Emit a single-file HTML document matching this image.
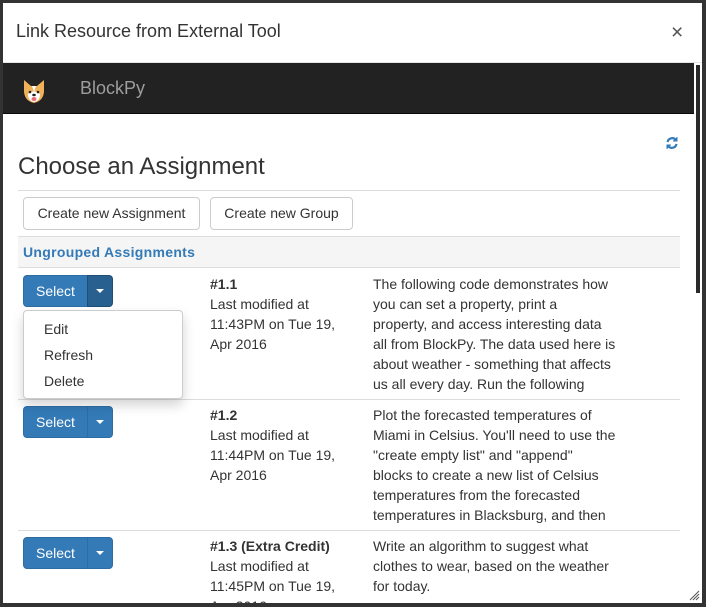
<!DOCTYPE html>
<html><head><meta charset="utf-8"><style>
*{box-sizing:border-box;margin:0;padding:0}
body{width:706px;height:607px;background:#333;font-family:"Liberation Sans",Arial,sans-serif;color:#333;font-size:14px;overflow:hidden;position:relative}
.modal{position:absolute;left:3px;top:3px;width:699px;height:600px;background:#fff;overflow:hidden}
.hdr{position:absolute;left:0;top:0;width:699px;height:60px;border-bottom:1px solid #e5e5e5}
.hdr .t{position:absolute;left:13px;top:18px;font-size:18px;color:#333}
.hdr .x{position:absolute;left:668px;top:18px;font-size:21px;color:#555}
.nav{position:absolute;left:0;top:60px;width:691px;height:51px;background:#222;border-bottom:1px solid #080808}
.nav .b{position:absolute;left:77px;top:15px;font-size:18px;color:#9d9d9d}
.sb{position:absolute;left:693px;top:62px;width:4px;height:228px;background:#2a2a2a}
.abs{position:absolute}
h2{position:absolute;left:15px;top:150px;font-size:24px;font-weight:normal;color:#333}
.line{position:absolute;left:15px;width:662px;height:1px;background:#ddd}
.btn{position:absolute;top:194px;height:33px;border:1px solid #ccc;border-radius:4px;background:#fff;font-size:14px;line-height:31px;text-align:center;color:#333}
.grp{position:absolute;left:15px;top:233px;width:662px;height:32px;background:#f5f5f5;border-top:1px solid #ddd;border-bottom:1px solid #ddd;color:#337ab7;font-weight:bold;padding:7px 5px;letter-spacing:0.3px}
.sel{position:absolute;left:20px;width:90px;height:32px}
.sel .a{position:absolute;left:0;top:0;width:65px;height:32px;background:#337ab7;border:1px solid #2e6da4;border-radius:4px 0 0 4px;color:#fff;text-align:center;line-height:30px}
.sel .c{position:absolute;left:64px;top:0;width:26px;height:32px;background:#337ab7;border:1px solid #2e6da4;border-radius:0 4px 4px 0}
.sel .c:after{content:"";position:absolute;left:8px;top:13px;border-left:4px solid transparent;border-right:4px solid transparent;border-top:4px solid #fff}
.sel.on .c{background:#286090;border-color:#204d74}
.col{position:absolute;line-height:20px;font-size:14px;color:#333}
.c3{font-size:14px;width:300px;white-space:nowrap}
.dd{position:absolute;left:20px;top:307px;width:160px;height:89px;background:#fff;border:1px solid #ccc;border-radius:4px;box-shadow:0 6px 12px rgba(0,0,0,.175)}
.dd div{position:absolute;left:20px;font-size:14px;color:#333}
</style></head><body>
<div class="modal">
<div class="hdr"><div class="t">Link Resource from External Tool</div><div class="x">×</div></div>
<div class="nav">
<svg class="abs" style="left:18px;top:15px" width="26" height="26" viewBox="0 0 26 26">
<path d="M3 2 L10 8 L16 8 L23 2 L23 14 Q22 23 13 25 Q4 23 3 14 Z" fill="#f0b15a"/>
<path d="M11 8 L13 14 L15 8 Z" fill="#fff"/>
<path d="M7 16 Q13 11 19 16 Q19 23 13 24 Q7 23 7 16Z" fill="#fff"/>
<circle cx="9" cy="14" r="1.3" fill="#222"/><circle cx="17" cy="14" r="1.3" fill="#222"/>
<ellipse cx="13" cy="17" rx="1.8" ry="1.2" fill="#222"/>
<ellipse cx="13" cy="21" rx="2.5" ry="2" fill="#e86a7a"/>
</svg>
<div class="b">BlockPy</div></div>
<div class="sb"></div>
<svg class="abs" style="left:662px;top:133px" width="14" height="14" viewBox="0 0 14 14" fill="none" stroke="#337ab7" stroke-width="2.2"><path d="M2.5 6 A4.8 4.8 0 0 1 11 4"/><path d="M11.5 8 A4.8 4.8 0 0 1 3 10"/><path d="M12 1 V5 H8" fill="#337ab7" stroke-width="1"/><path d="M2 13 V9 H6" fill="#337ab7" stroke-width="1"/></svg>
<h2>Choose an Assignment</h2>
<div class="line" style="top:187px"></div>
<div class="btn" style="left:20px;width:177px">Create new Assignment</div>
<div class="btn" style="left:207px;width:143px">Create new Group</div>
<div class="grp">Ungrouped Assignments</div>

<div class="sel on" style="top:272px"><div class="a">Select</div><div class="c"></div></div>
<div class="col" style="left:207px;top:271px"><b>#1.1</b><br>Last modified at<br>11:43PM on Tue 19,<br>Apr 2016</div>
<div class="col c3" style="left:370px;top:271px;height:120px;overflow:hidden">The following code demonstrates how<br>you can set a property, print a<br>property, and access interesting data<br>all from BlockPy. The data used here is<br>about weather - something that affects<br>us all every day. Run the following</div>
<div class="line" style="top:396px"></div>

<div class="sel" style="top:403px"><div class="a">Select</div><div class="c"></div></div>
<div class="col" style="left:207px;top:402px"><b>#1.2</b><br>Last modified at<br>11:44PM on Tue 19,<br>Apr 2016</div>
<div class="col c3" style="left:370px;top:402px;height:120px;overflow:hidden">Plot the forecasted temperatures of<br>Miami in Celsius. You'll need to use the<br>"create empty list" and "append"<br>blocks to create a new list of Celsius<br>temperatures from the forecasted<br>temperatures in Blacksburg, and then</div>
<div class="line" style="top:527px"></div>

<div class="sel" style="top:534px"><div class="a">Select</div><div class="c"></div></div>
<div class="col" style="left:207px;top:533px"><b>#1.3 (Extra Credit)</b><br>Last modified at<br>11:45PM on Tue 19,<br>Apr 2016</div>
<div class="col c3" style="left:370px;top:533px">Write an algorithm to suggest what<br>clothes to wear, based on the weather<br>for today.</div>

<div class="dd"><div style="top:10px">Edit</div><div style="top:36px">Refresh</div><div style="top:62px">Delete</div></div>
<svg class="abs" style="left:686px;top:587px" width="11" height="11" viewBox="0 0 11 11" stroke="#555" stroke-width="1"><path d="M10 1 L1 10 M10 4 L4 10 M10 7 L7 10"/></svg>
</div>
</body></html>
